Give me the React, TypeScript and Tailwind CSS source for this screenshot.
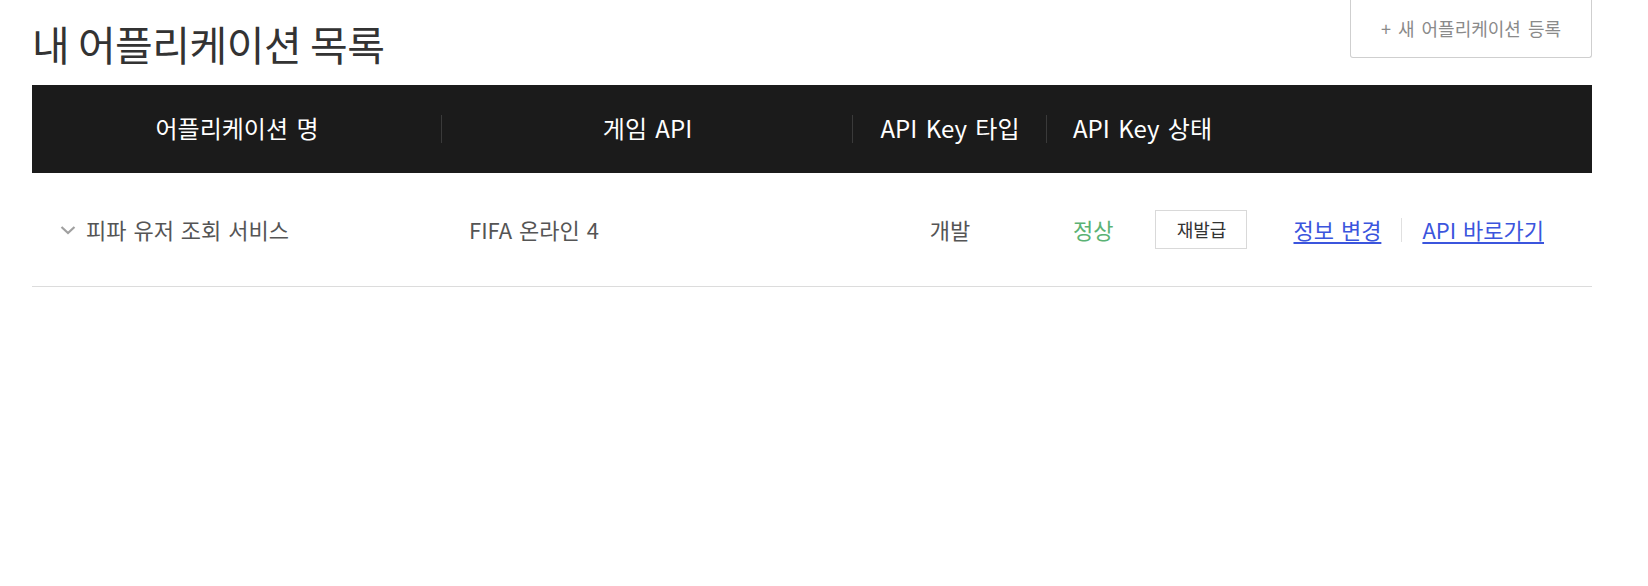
const font = { fontFamily: '"Noto Sans CJK KR", "Noto Sans", sans-serif' };

function HeaderCell({
  label,
  width,
  align = 'center',
  divider = true,
}: {
  label?: string;
  width: string;
  align?: 'center' | 'left';
  divider?: boolean;
}) {
  return (
    <div className={`relative flex h-full items-center ${width} ${align === 'center' ? 'justify-center' : 'justify-start pl-[26px]'}`}>
      <span className="-mt-[2px] text-[24px] text-white [word-spacing:3px]">{label}</span>
      {divider && <span className="absolute right-0 top-[30px] h-[28px] w-px bg-[#3a3a3a]" />}
    </div>
  );
}

function App() {
  return (
    <div className="min-h-screen bg-white" style={font}>
      <div className="ml-8 w-[1560px]">
        {/* title bar */}
        <div className="flex h-[85px] items-start justify-between">
          <h1 className="pt-[23px] text-[41px] leading-none font-normal tracking-[-0.5px] text-[#333]">
            내 어플리케이션 목록
          </h1>
          <button className="h-[58px] w-[242px] rounded-b-[3px] border border-t-0 border-[#cfcfcf] text-[18px] text-[#8a8a8a] [word-spacing:3px]">
            + 새 어플리케이션 등록
          </button>
        </div>

        {/* table head */}
        <div className="flex h-[88px] bg-[#1b1b1b]">
          <HeaderCell label="어플리케이션 명" width="w-[410px]" />
          <HeaderCell label="게임 API" width="w-[411px]" />
          <HeaderCell label="API Key 타입" width="w-[194px]" />
          <HeaderCell label="API Key 상태" width="w-[194px]" align="left" divider={false} />
          <div className="flex-1" />
        </div>

        {/* row */}
        <div className="flex h-[114px] items-center border-b border-[#dcdcdc] text-[22px] [word-spacing:2px]">
          <div className="flex w-[410px] items-center gap-[10px] pl-[28px] text-[#555]">
            <svg width="16" height="10" viewBox="0 0 16 10" fill="none">
              <path d="M1.5 2 L8 8 L14.5 2" stroke="#a0a0a0" strokeWidth="2.2" />
            </svg>
            <span>피파 유저 조회 서비스</span>
          </div>
          <div className="w-[411px] pl-[27px] text-[#555]">FIFA 온라인 4</div>
          <div className="w-[194px] text-center text-[#555]">개발</div>
          <div className="flex items-center pl-[26px]">
            <span className="text-[#5bb274]">정상</span>
            <button className="ml-[42px] h-[39px] w-[92px] border border-[#d9d9d9] bg-white text-[18px] text-[#333]">
              재발급
            </button>
          </div>
          <div className="ml-[46px] flex items-center">
            <a href="#" className="text-[#3b55dd] underline underline-offset-[3px]">정보 변경</a>
            <span className="mx-[20px] h-[24px] w-px bg-[#e0e0e0]" />
            <a href="#" className="text-[#3b55dd] underline underline-offset-[3px]">API 바로가기</a>
          </div>
        </div>
      </div>
    </div>
  );
}

export default App;
